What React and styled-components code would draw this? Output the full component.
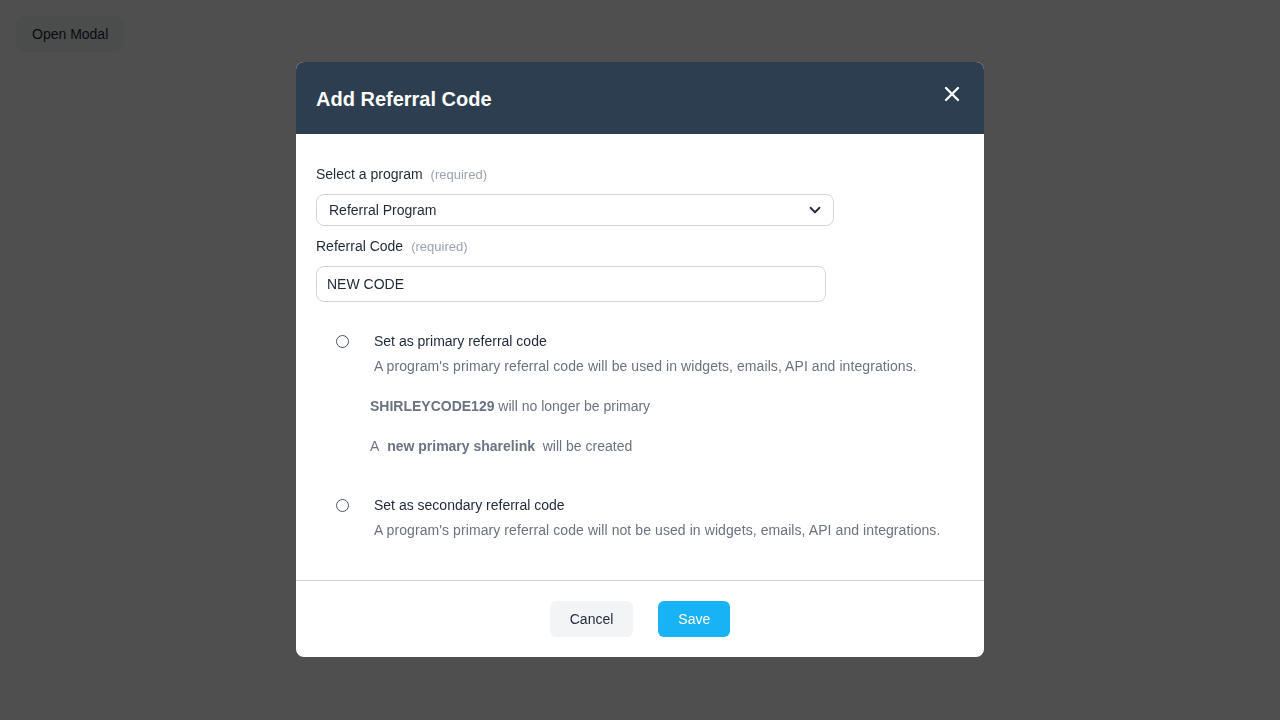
import React from "react";
import styled, { createGlobalStyle } from "styled-components";
import { ChevronDown, X } from "lucide-react";

const Global = createGlobalStyle`
  html, body { margin: 0; padding: 0; background: #ffffff; }
  body { font-family: "Liberation Sans", Arial, sans-serif; color: #1f2937; }
  * { box-sizing: border-box; }
`;

const Page = styled.div`
  padding: 16px;
  min-height: 720px;
`;

const OpenButton = styled.button`
  height: 36px;
  padding: 0 16px;
  border: none;
  border-radius: 8px;
  background: #f3f4f6;
  color: #1f2937;
  font-family: inherit;
  font-size: 14px;
`;

const Overlay = styled.div`
  position: fixed;
  inset: 0;
  background: rgba(0, 0, 0, 0.69);
  display: flex;
  align-items: flex-start;
  justify-content: center;
  padding-top: 62px;
`;

const Modal = styled.div`
  width: 688px;
  background: #ffffff;
  border-radius: 8px;
  overflow: hidden;
  display: flex;
  flex-direction: column;
`;

const Header = styled.div`
  height: 72px;
  background: #2d3e50;
  display: flex;
  align-items: center;
  justify-content: space-between;
  padding: 0 20px;
`;

const Title = styled.h2`
  margin: 2px 0 0;
  color: #ffffff;
  font-size: 20px;
  line-height: 24px;
  font-weight: 700;
`;

const CloseButton = styled.button`
  border: none;
  background: transparent;
  padding: 0;
  margin-bottom: 8px;
  display: flex;
  color: #ffffff;
`;

const Body = styled.div`
  padding: 30px 20px 40px;
  display: flex;
  flex-direction: column;
`;

const Label = styled.div`
  height: 20px;
  font-size: 14px;
  line-height: 20px;
  color: #1f2937;
  margin-bottom: 10px;
  display: flex;
  align-items: baseline;
`;

const Req = styled.span`
  font-size: 13px;
  line-height: 20px;
  color: #9ca3af;
  margin-left: 8px;
`;

const SelectBox = styled.div`
  width: 518px;
  height: 32px;
  border: 1px solid #d1d5db;
  border-radius: 8px;
  display: flex;
  align-items: center;
  justify-content: space-between;
  padding: 0 9px 0 12px;
  font-size: 14px;
  color: #1f2937;
  margin-bottom: 10px;
`;

const TextInput = styled.input`
  width: 510px;
  height: 36px;
  border: 1px solid #d1d5db;
  border-radius: 8px;
  padding: 0 10px;
  font-family: inherit;
  font-size: 14px;
  color: #1f2937;
  outline: none;
`;

const Options = styled.div`
  display: flex;
  flex-direction: column;
  gap: 39px;
  margin-top: 29px;
  padding-left: 20px;
`;

const Option = styled.div`
  display: grid;
  grid-template-columns: 13px 1fr;
  column-gap: 25px;
`;

const Radio = styled.input.attrs({ type: "radio" })`
  appearance: none;
  margin: 4px 0 0;
  width: 13px;
  height: 13px;
  border: 1px solid #4b5563;
  border-radius: 50%;
  background: #fff;
`;

const OptionText = styled.div`
  display: flex;
  flex-direction: column;
`;

const OptionTitle = styled.div`
  font-size: 14px;
  line-height: 20px;
  color: #1f2937;
  margin-bottom: 5px;
`;

const OptionDesc = styled.div`
  font-size: 14px;
  line-height: 20px;
  color: #6b7280;
  letter-spacing: 0.08px;
`;

const Note = styled.div`
  font-size: 14px;
  line-height: 20px;
  color: #6b7280;
  margin-top: 20px;
  margin-left: -4px;
  b { font-weight: 700; }
`;

const Footer = styled.div`
  border-top: 1px solid #d1d5db;
  padding: 20px;
  display: flex;
  justify-content: center;
  gap: 25px;
`;

const Button = styled.button`
  height: 36px;
  padding: 0 20px;
  border: none;
  border-radius: 6px;
  font-family: inherit;
  font-size: 14px;
  background: ${(p) => (p.$primary ? "#17b3f5" : "#f3f4f6")};
  color: ${(p) => (p.$primary ? "#ffffff" : "#1f2937")};
`;

export default function App() {
  return (
    <>
      <Global />
      <Page>
        <OpenButton>Open Modal</OpenButton>
      </Page>
      <Overlay>
        <Modal>
          <Header>
            <Title>Add Referral Code</Title>
            <CloseButton aria-label="Close">
              <X size={24} strokeWidth={2.3} />
            </CloseButton>
          </Header>
          <Body>
            <Label>
              Select a program<Req>(required)</Req>
            </Label>
            <SelectBox>
              <span>Referral Program</span>
              <ChevronDown size={18} strokeWidth={2.4} color="#1f2937" />
            </SelectBox>
            <Label>
              Referral Code<Req>(required)</Req>
            </Label>
            <TextInput defaultValue="NEW CODE" />
            <Options>
              <Option>
                <Radio name="codeType" />
                <OptionText>
                  <OptionTitle>Set as primary referral code</OptionTitle>
                  <OptionDesc>
                    A program's primary referral code will be used in widgets, emails, API and integrations.
                  </OptionDesc>
                  <Note>
                    <b>SHIRLEYCODE129</b> will no longer be primary
                  </Note>
                  <Note>
                    A&nbsp; <b>new primary sharelink</b>&nbsp; will be created
                  </Note>
                </OptionText>
              </Option>
              <Option>
                <Radio name="codeType" />
                <OptionText>
                  <OptionTitle>Set as secondary referral code</OptionTitle>
                  <OptionDesc>
                    A program's primary referral code will not be used in widgets, emails, API and integrations.
                  </OptionDesc>
                </OptionText>
              </Option>
            </Options>
          </Body>
          <Footer>
            <Button>Cancel</Button>
            <Button $primary>Save</Button>
          </Footer>
        </Modal>
      </Overlay>
    </>
  );
}
